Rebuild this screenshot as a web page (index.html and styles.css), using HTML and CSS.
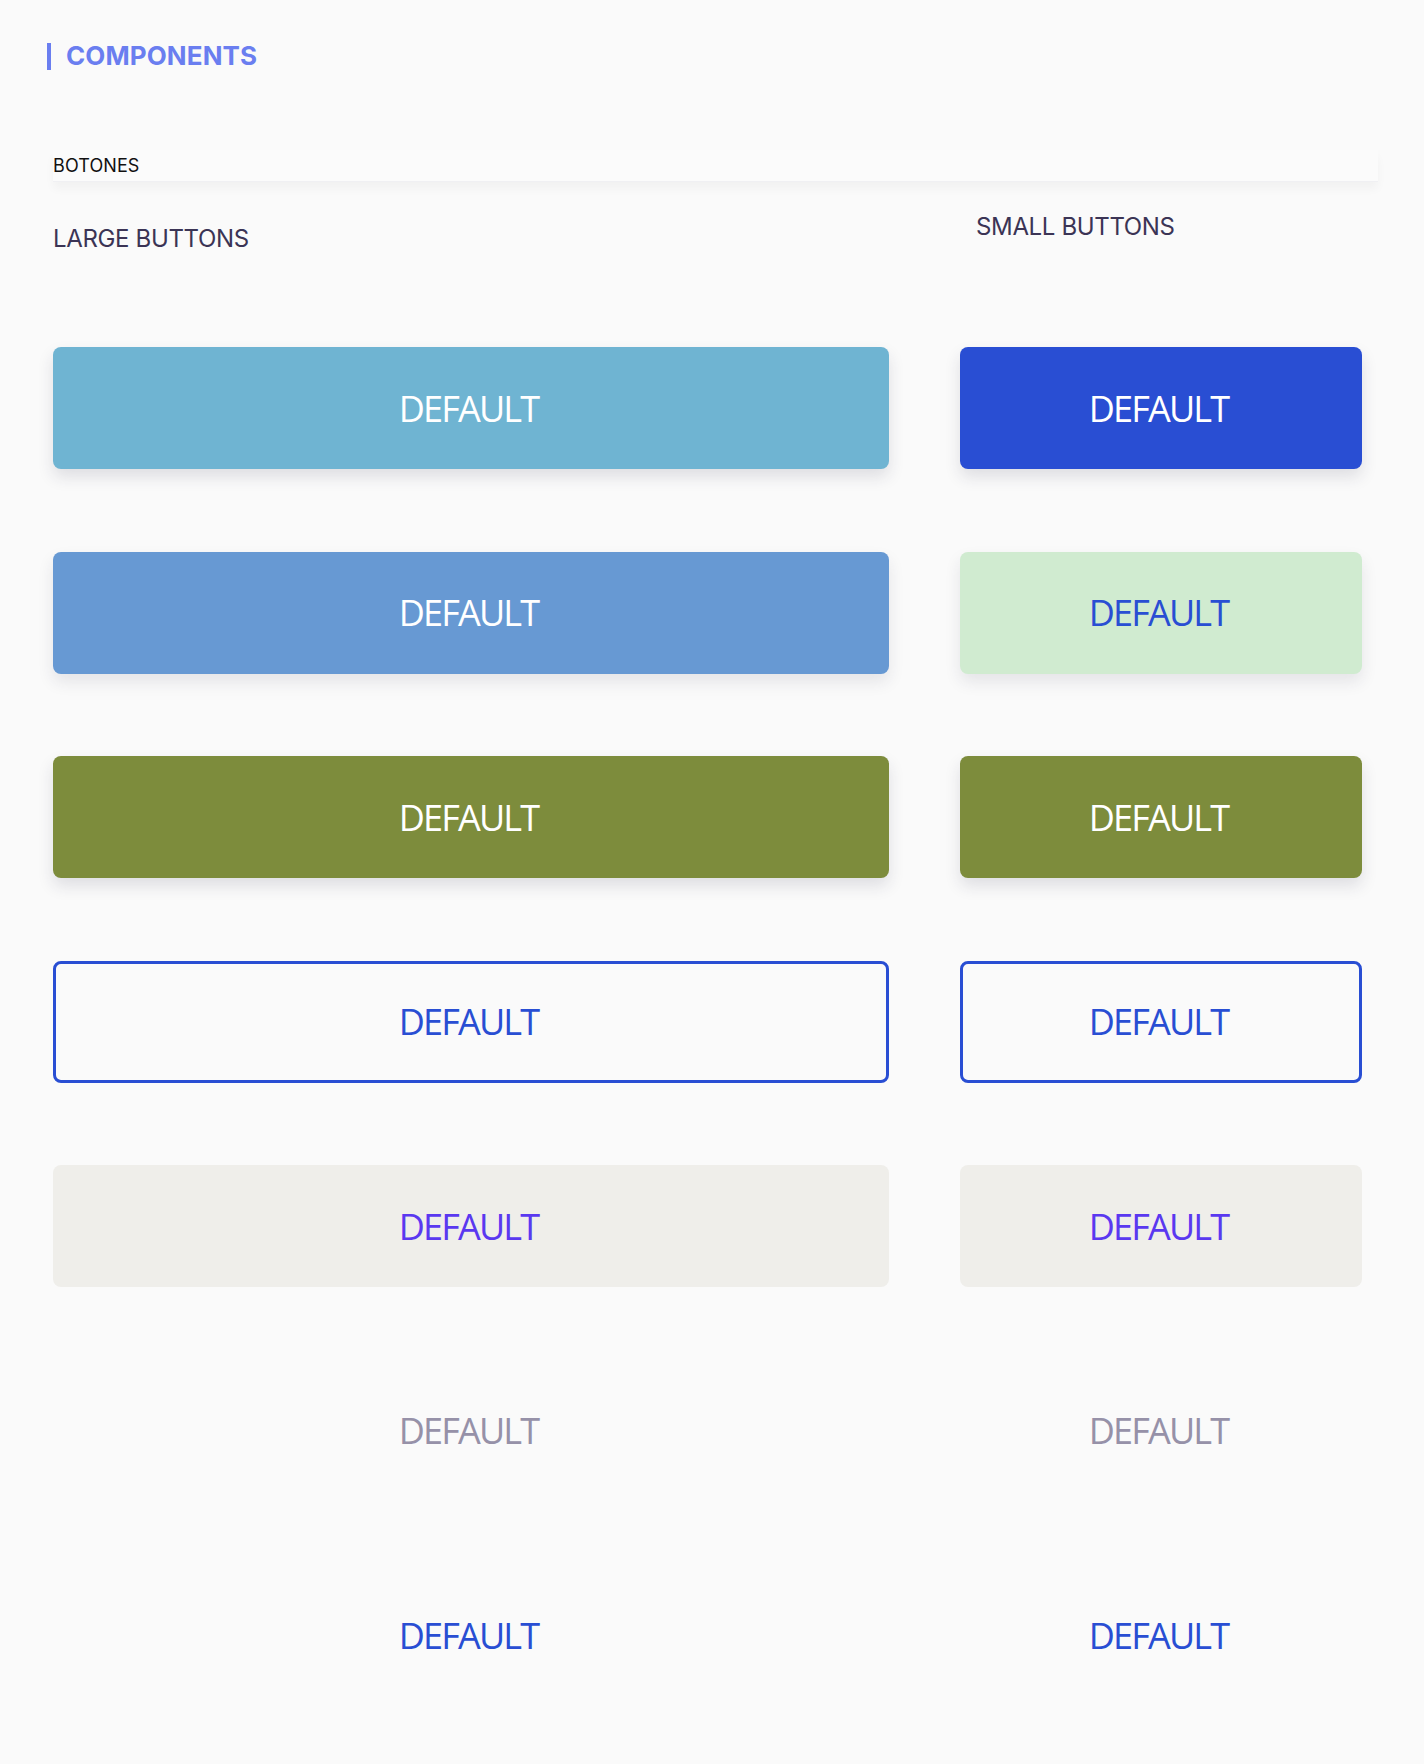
FILE: index.html
```html
<!DOCTYPE html>
<html lang="es">
<head>
<meta charset="utf-8">
<title>Components</title>
<link rel="stylesheet" href="styles.css">
</head>
<body>
  <header class="page-title">
    <span class="title-bar"></span>
    <span class="title-text">COMPONENTS</span>
  </header>

  <section class="section">
    <div class="section-head">BOTONES</div>
    <div class="cols">
      <h3 class="col-title col-title-large">LARGE BUTTONS</h3>
      <h3 class="col-title col-title-small">SMALL BUTTONS</h3>

      <div class="stack">
        <button class="btn btn-sky">DEFAULT</button>
        <button class="btn btn-steel">DEFAULT</button>
        <button class="btn btn-olive">DEFAULT</button>
        <button class="btn btn-outline">DEFAULT</button>
        <button class="btn btn-ghost">DEFAULT</button>
        <button class="btn btn-text-muted">DEFAULT</button>
        <button class="btn btn-text-blue">DEFAULT</button>
      </div>

      <div class="stack">
        <button class="btn btn-blue">DEFAULT</button>
        <button class="btn btn-mint">DEFAULT</button>
        <button class="btn btn-olive">DEFAULT</button>
        <button class="btn btn-outline">DEFAULT</button>
        <button class="btn btn-ghost">DEFAULT</button>
        <button class="btn btn-text-muted">DEFAULT</button>
        <button class="btn btn-text-blue">DEFAULT</button>
      </div>
    </div>
  </section>
</body>
</html>
```

FILE: styles.css
```css
* { box-sizing: border-box; }

html, body {
  margin: 0;
  padding: 0;
  background: #fafafa;
}

body {
  font-family: Inter, "Noto Sans", sans-serif;
  min-height: 1764px;
}

.page-title {
  display: flex;
  align-items: center;
  gap: 15px;
  padding: 40px 0 0 47px;
  height: 72px;
}

.title-bar {
  display: block;
  width: 4px;
  height: 27px;
  background: #6a7ef0;
}

.title-text {
  font-size: 26px;
  font-weight: 700;
  color: #6a7ef0;
  line-height: 30px;
  letter-spacing: 0.1px;
}

.section {
  padding: 0 46px 0 53px;
}

.section-head {
  margin-top: 78px;
  padding: 5px 0 5px 0;
  font-size: 18px;
  line-height: 21px;
  letter-spacing: 0.1px;
  color: #111;
  background: #fbfbfb;
  border-bottom: 1px solid #f0f0f3;
  box-shadow: 0 7px 10px rgba(0, 0, 0, 0.035);
}

.cols {
  display: grid;
  grid-template-columns: 836px 402px;
  grid-template-rows: 165px auto;
  column-gap: 71px;
}

.col-title {
  margin: 0;
  font-size: 24px;
  line-height: 29px;
  font-weight: 400;
  letter-spacing: -0.35px;
  color: #3b3455;
}

.col-title-large { padding-top: 42px; }
.col-title-small { padding-top: 30px; padding-left: 16px; }

.stack {
  display: flex;
  flex-direction: column;
  gap: 82.5px;
}

.btn {
  display: flex;
  align-items: center;
  justify-content: center;
  height: 122px;
  width: 100%;
  padding: 0 5px 0 0;
  border: 0;
  border-radius: 8px;
  font-family: "Open Sans", "Noto Sans", sans-serif;
  font-size: 36px;
  letter-spacing: -1.8px;
  font-weight: 400;
  background: transparent;
  color: #fff;
  cursor: pointer;
}

.btn-sky { background: #6fb4d2; box-shadow: 0 8px 16px rgba(40, 40, 70, 0.13); }
.btn-steel { background: #6799d3; box-shadow: 0 8px 16px rgba(40, 40, 70, 0.10); }
.btn-olive { background: #7d8c3c; box-shadow: 0 8px 16px rgba(40, 40, 70, 0.13); }
.btn-blue { background: #294ed3; box-shadow: 0 8px 16px rgba(40, 40, 70, 0.13); }
.btn-mint { background: #d0ebd0; color: #294ed3; box-shadow: 0 8px 16px rgba(40, 40, 70, 0.10); }

.btn-outline {
  background: #fafafa;
  border: 3px solid #294ed3;
  color: #294ed3;
}

.btn-ghost { background: #efeeea; color: #5a38f0; }
.btn-text-muted { color: #9691a8; }
.btn-text-blue { color: #294ed3; }
```
